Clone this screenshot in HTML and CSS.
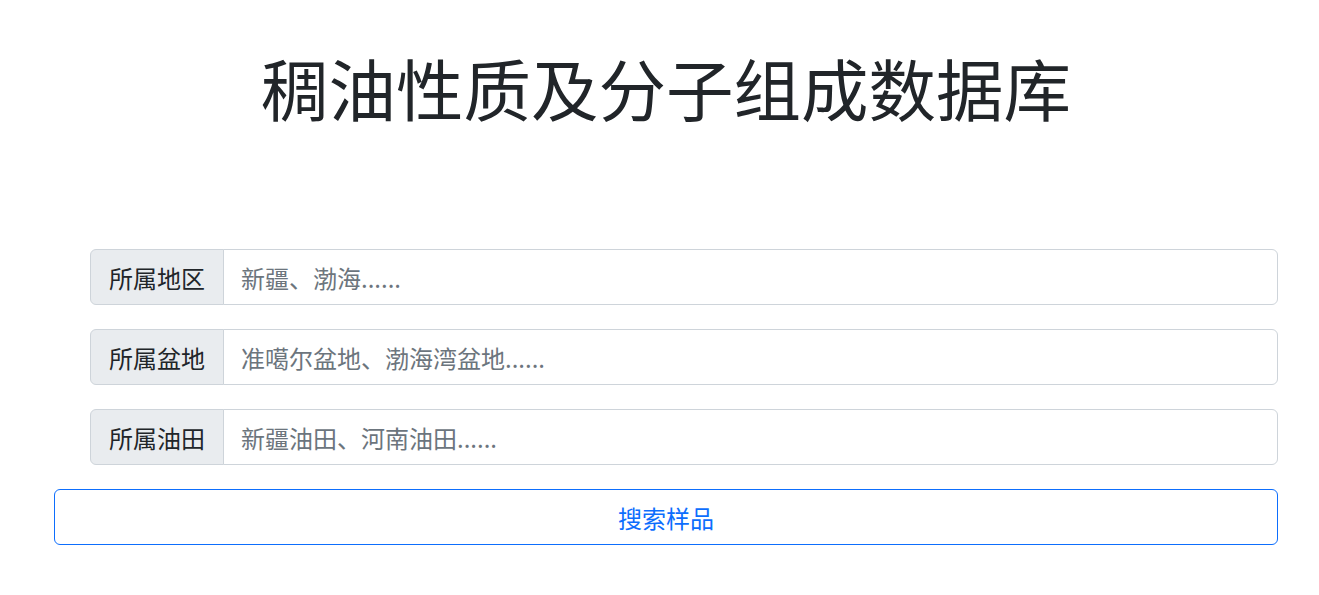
FILE: index.html
```html
<!DOCTYPE html>
<html lang="zh-CN">
<head>
<meta charset="utf-8">
<title>稠油性质及分子组成数据库</title>
<link rel="stylesheet" href="styles.css">
</head>
<body>
<main class="page">
  <h1 class="title">稠油性质及分子组成数据库</h1>
  <form class="search">
    <div class="fields">
      <div class="input-group">
        <span class="input-label">所属地区</span>
        <input class="input-field" type="text" placeholder="新疆、渤海......">
      </div>
      <div class="input-group">
        <span class="input-label">所属盆地</span>
        <input class="input-field" type="text" placeholder="准噶尔盆地、渤海湾盆地......">
      </div>
      <div class="input-group">
        <span class="input-label">所属油田</span>
        <input class="input-field" type="text" placeholder="新疆油田、河南油田......">
      </div>
    </div>
    <button class="btn-search" type="button">搜索样品</button>
  </form>
</main>
</body>
</html>
```
FILE: styles.css
```css
* { box-sizing: border-box; }
html, body {
  margin: 0;
  padding: 0;
  background: #fff;
}
body {
  font-family: "Noto Sans CJK SC", "Noto Sans", sans-serif;
  color: #212529;
}
.page {
  padding: 0 41px 0 54px;
}
.title {
  margin: 0;
  padding-top: 46px;
  height: 249px;
  text-align: center;
  font-size: 67.5px;
  font-weight: 400;
  line-height: 1.2;
  color: #212529;
}
.search {
  display: flex;
  flex-direction: column;
  gap: 24px;
}
.fields {
  display: flex;
  flex-direction: column;
  gap: 24px;
  padding-left: 36px;
}
.input-group {
  display: flex;
  height: 56px;
}
.input-label {
  display: flex;
  align-items: center;
  padding: 0 18px;
  font-size: 24px;
  color: #212529;
  background: #e9ecef;
  border: 1px solid #ced4da;
  border-radius: 6px 0 0 6px;
  white-space: nowrap;
}
.input-field {
  flex: 1;
  min-width: 0;
  margin-left: -1px;
  padding: 0 17px;
  font-family: inherit;
  font-size: 24px;
  color: #212529;
  background: #fff;
  border: 1px solid #ced4da;
  border-radius: 0 6px 6px 0;
  outline: none;
}
.input-field::placeholder {
  color: #6c757d;
  opacity: 1;
}
.btn-search {
  height: 56px;
  font-family: inherit;
  font-size: 24px;
  color: #0d6efd;
  background: transparent;
  border: 1px solid #0d6efd;
  border-radius: 6px;
  cursor: pointer;
}
```
